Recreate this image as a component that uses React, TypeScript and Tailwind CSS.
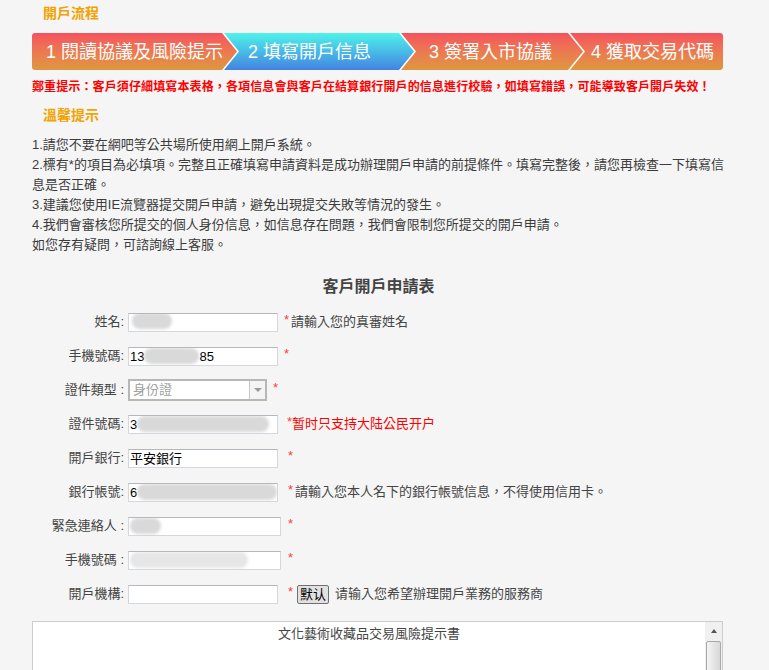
import type { ReactNode } from "react";

// steps of the account-opening flow
const steps = [
  {
    label: "1 閱讀協議及風險提示",
    cls: "w-[205px] pl-[14px] rounded-l-[3px] bg-linear-to-b from-[#f5525e] to-[#de973e] [clip-path:polygon(0_0,190px_0,205px_50%,190px_100%,0_100%)]",
  },
  {
    label: "2 填寫開戶信息",
    cls: "w-[190px] -ml-[13px] pl-[24px] bg-linear-to-b from-[#4ff3e9] to-[#4482e0] [clip-path:polygon(0_0,175px_0,190px_50%,175px_100%,0_100%,15px_50%)]",
  },
  {
    label: "3 簽署入市協議",
    cls: "w-[182px] -ml-[13px] pl-[28px] bg-linear-to-b from-[#f5525e] to-[#de973e] [clip-path:polygon(0_0,167px_0,182px_50%,167px_100%,0_100%,15px_50%)]",
  },
  {
    label: "4 獲取交易代碼",
    cls: "w-[153px] -ml-[13px] pl-[21px] rounded-r-[3px] bg-linear-to-b from-[#f5525e] to-[#de973e] [clip-path:polygon(0_0,100%_0,100%_100%,0_100%,15px_50%)]",
  },
];

const tips = [
  "1.請您不要在網吧等公共場所使用網上開戶系統。",
  "2.標有*的項目為必填項。完整且正確填寫申請資料是成功辦理開戶申請的前提條件。填寫完整後，請您再檢查一下填寫信",
  "息是否正確。",
  "3.建議您使用IE流覽器提交開戶申請，避免出現提交失敗等情況的發生。",
  "4.我們會審核您所提交的個人身份信息，如信息存在問題，我們會限制您所提交的開戶申請。",
  "如您存有疑問，可諮詢線上客服。",
];

const Blur = ({ w, light }: { w: number; light?: boolean }) => (
  <span
    className={`inline-block h-[16px] rounded-full blur-[1.5px] ${
      light ? "bg-[#e6e6e6]" : "bg-[#d9d9d9]"
    }`}
    style={{ width: w }}
  />
);

const Star = ({ ml }: { ml: string }) => (
  <span className={`${ml} relative -top-[3px] text-[13px] leading-none text-[#ff3b3b]`}>*</span>
);

const Input = ({ children, wide }: { children?: ReactNode; wide?: boolean }) => (
  <div
    className={`${
      wide ? "w-[153px]" : "w-[150px]"
    } flex h-[19px] items-center overflow-hidden border border-[#d3d8de] border-t-[#b4b8be] bg-white pl-[1px] text-[13px] leading-none text-black`}
  >
    {children}
  </div>
);

const Row = ({ label, children }: { label: string; children: ReactNode }) => (
  <div className="flex h-[34px] items-center">
    <div className="w-[96px] shrink-0 pr-[4px] text-right text-[13px] text-[#444]">{label}</div>
    {children}
  </div>
);

export default function App() {
  return (
    <div className="h-[670px] w-[769px] overflow-hidden bg-[#f5f5f5] [font-family:'Liberation_Sans','Noto_Sans_CJK_TC',sans-serif]">
      <div className="w-[693px] pl-[32px] box-content">
        <h2 className="h-[20px] pt-[3px] pl-[11px] text-[14px] leading-[20px] font-bold text-[#f3a200] box-content">
          開戶流程
        </h2>

        {/* step bar */}
        <div className="mt-[10px] flex h-[37px] w-[691px] bg-white">
          {steps.map((s) => (
            <div
              key={s.label}
              className={`${s.cls} flex h-full shrink-0 items-center text-[18px] leading-none text-white`}
            >
              {s.label}
            </div>
          ))}
        </div>

        <p className="mt-[7px] whitespace-nowrap text-[12px] leading-[20px] font-bold tracking-[0.12px] text-[#ff0000]">
          鄭重提示：客戶須仔細填寫本表格，各項信息會與客戶在結算銀行開戶的信息進行校驗，如填寫錯誤，可能導致客戶開戶失效！
        </p>

        <h3 className="mt-[8px] pl-[11px] text-[14px] leading-[20px] font-bold text-[#f3a200]">溫馨提示</h3>

        <div className="mt-[10px] text-[13px] leading-[20px] text-[#3c3c3c]">
          {tips.map((t) => (
            <div key={t} className="whitespace-nowrap">
              {t}
            </div>
          ))}
        </div>

        <h3 className="mt-[20px] text-center text-[16px] leading-[24px] font-bold text-[#444]">客戶開戶申請表</h3>

        <div className="mt-[6px]">
          <Row label="姓名:">
            <Input>
              <span className="ml-[2px]">
                <Blur w={40} />
              </span>
            </Input>
            <Star ml="ml-[6px]" />
            <span className="ml-[2px] text-[13px] text-[#444]">請輸入您的真審姓名</span>
          </Row>

          <Row label="手機號碼:">
            <Input>
              13
              <Blur w={55} />
              85
            </Input>
            <Star ml="ml-[6px]" />
          </Row>

          <Row label="證件類型 :">
            <div className="flex h-[22px] w-[139px] border-2 border-[#b7b7b7] bg-white">
              <span className="flex-1 pl-[3px] text-[13px] leading-[18px] text-[#a0a0a0]">身份證</span>
              <span className="flex w-[16px] items-center justify-center border-l border-[#c8c8c8] bg-[#f4f4f4]">
                <span className="h-0 w-0 border-x-[4px] border-t-[4px] border-x-transparent border-t-[#9a9a9a]" />
              </span>
            </div>
            <Star ml="ml-[6px]" />
          </Row>

          <Row label="證件號碼:">
            <Input>
              3
              <Blur w={132} />
            </Input>
            <Star ml="ml-[9px]" />
            <span className="text-[13px] text-[#ff0000]">暂时只支持大陆公民开户</span>
          </Row>

          <Row label="開戶銀行:">
            <Input>平安銀行</Input>
            <Star ml="ml-[10px]" />
          </Row>

          <Row label="銀行帳號:">
            <Input>
              6
              <Blur w={140} />
            </Input>
            <Star ml="ml-[10px]" />
            <span className="ml-[2px] text-[13px] text-[#444]">請輸入您本人名下的銀行帳號信息，不得使用信用卡。</span>
          </Row>

          <Row label="緊急連絡人 :">
            <Input wide>
              <Blur w={31} />
            </Input>
            <Star ml="ml-[7px]" />
          </Row>

          <Row label="手機號碼 :">
            <Input wide>
              <Blur w={118} light />
            </Input>
            <Star ml="ml-[7px]" />
          </Row>

          <Row label="開戶機構:">
            <Input />
            <Star ml="ml-[10px]" />
            <button className="ml-[4px] h-[19px] rounded-[2px] border border-[#707070] bg-[#e1e1e1] px-[2px] text-[13px] leading-none text-black">
              默认
            </button>
            <span className="ml-[6px] text-[13px] text-[#444]">请输入您希望辦理開戶業務的服務商</span>
          </Row>
        </div>

        {/* risk statement box */}
        <div className="mt-[10px] flex h-[120px] w-[691px] border border-[#cccccc] bg-white">
          <div className="flex-1 pt-[3px] text-center text-[13px] leading-[18px] text-[#444]">
            文化藝術收藏品交易風險提示書
          </div>
          <div className="flex w-[17px] flex-col bg-[#f0f0f0]">
            <div className="flex h-[17px] items-center justify-center">
              <span className="h-0 w-0 border-x-[3px] border-b-[4px] border-x-transparent border-b-[#555]" />
            </div>
            <div className="mx-[1px] mt-[2px] flex-1 rounded-[2px] border border-[#a8a8a8] bg-linear-to-r from-[#f4f4f4] to-[#d8d8d8]" />
          </div>
        </div>
      </div>
    </div>
  );
}
